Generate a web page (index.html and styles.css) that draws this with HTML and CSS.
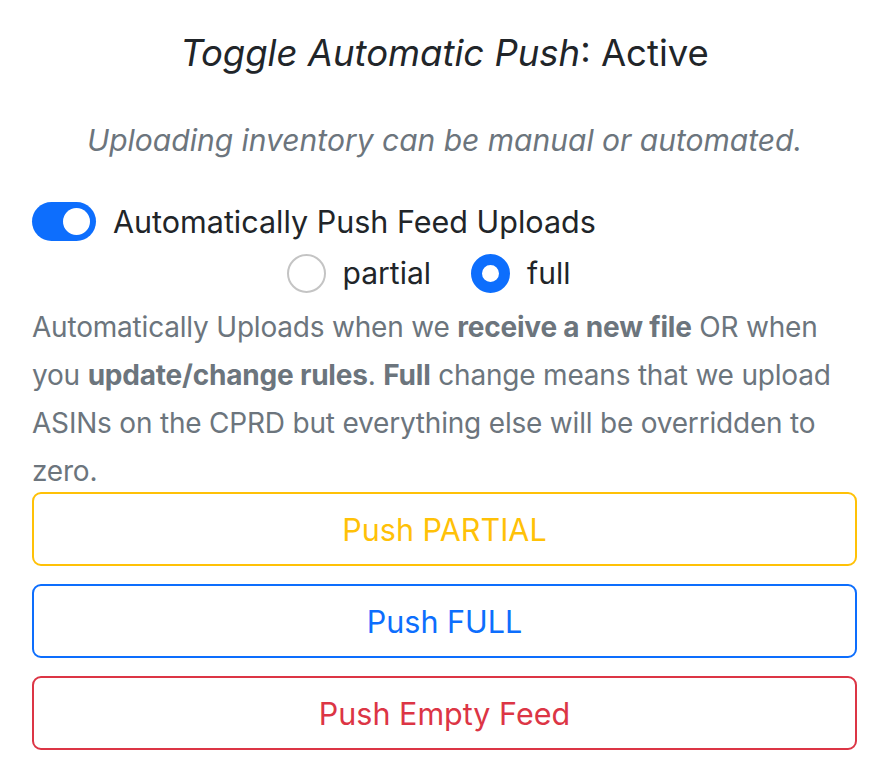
FILE: index.html
```html
<!DOCTYPE html>
<html>
<head>
<meta charset="utf-8">
<link rel="stylesheet" href="styles.css">
</head>
<body>
<div class="panel">
  <h3 class="title"><em>Toggle Automatic Push</em>: Active</h3>
  <p class="lead">Uploading inventory can be manual or automated.</p>
  <div class="switch-row">
    <span class="switch"><span class="knob"></span></span>
    <span class="switch-label">Automatically Push Feed Uploads</span>
  </div>
  <div class="radio-row">
    <label class="radio-item"><span class="radio"></span><span>partial</span></label>
    <label class="radio-item"><span class="radio checked"></span><span>full</span></label>
  </div>
  <p class="desc">Automatically Uploads when we <b>receive a new file</b> OR when you <b>update/change rules</b>. <b>Full</b> change means that we upload ASINs on the CPRD but everything else will be overridden to zero.</p>
  <div class="buttons">
    <button class="btn warning">Push PARTIAL</button>
    <button class="btn primary">Push FULL</button>
    <button class="btn danger">Push Empty Feed</button>
  </div>
</div>
</body>
</html>
```
FILE: styles.css
```css
html, body {
  margin: 0;
  padding: 0;
  background: #fff;
}
body {
  font-family: Inter, "Noto Sans", sans-serif;
  color: #212529;
}
.panel {
  padding: 0 31px 0 32px;
}
.title {
  margin: 0;
  padding-top: 30px;
  font-size: 36.5px;
  font-weight: 400;
  line-height: 46px;
  text-align: center;
}
.title em {
  font-style: italic;
}
.lead {
  margin: 44px 0 0;
  font-size: 30px;
  line-height: 40px;
  font-style: italic;
  color: #6c757d;
  text-align: center;
}
.switch-row {
  margin-top: 41px;
  display: flex;
  align-items: center;
  gap: 17px;
  height: 40px;
}
.switch {
  width: 64px;
  height: 39px;
  border-radius: 20px;
  background: #0d6efd;
  display: flex;
  align-items: center;
  justify-content: flex-end;
  padding-right: 6px;
  box-sizing: border-box;
}
.knob {
  width: 27px;
  height: 27px;
  border-radius: 50%;
  background: #fff;
}
.switch-label {
  font-size: 30.5px;
}
.radio-row {
  margin-top: 12px;
  display: flex;
  justify-content: center;
  gap: 40px;
  padding-right: 32px;
  height: 40px;
  align-items: center;
}
.radio-item {
  display: flex;
  align-items: center;
  gap: 17px;
  font-size: 30px;
}
.radio {
  width: 39px;
  height: 39px;
  border-radius: 50%;
  border: 2px solid #c4c4c4;
  box-sizing: border-box;
}
.radio.checked {
  border: 11px solid #0d6efd;
}
.desc {
  margin: 10px 0 0;
  font-size: 28px;
  line-height: 48px;
  letter-spacing: -0.2px;
  color: #6c757d;
}
.desc b {
  font-weight: 700;
}
.buttons {
  margin-top: -3px;
  display: flex;
  flex-direction: column;
  gap: 18px;
}
.btn {
  height: 74px;
  border-radius: 9px;
  background: #fff;
  font-family: inherit;
  font-size: 30.5px;
  border: 2px solid;
  cursor: pointer;
}
.warning { color: #ffc107; border-color: #ffc107; }
.primary { color: #0d6efd; border-color: #0d6efd; }
.danger { color: #dc3545; border-color: #dc3545; }
```
